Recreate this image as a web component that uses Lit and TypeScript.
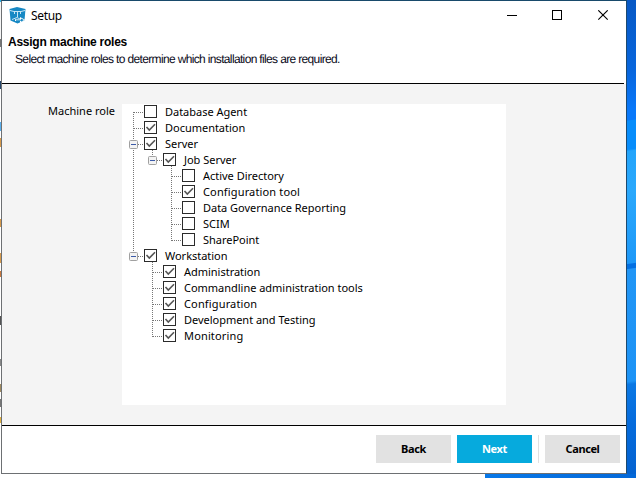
import { LitElement, html, css, svg } from "lit";
import { customElement, property } from "lit/decorators.js";
import { classMap } from "lit/directives/class-map.js";

interface Role {
  label: string;
  level: number;
  checked: boolean;
  open?: boolean;
  last?: boolean;
  wide?: boolean;
  rails?: number[];
}

// rails: ancestor levels whose vertical connector continues past this row
const ROLES: Role[] = [
  { label: "Database Agent", level: 0, checked: false },
  { label: "Documentation", level: 0, checked: true },
  { label: "Server", level: 0, checked: true, open: true },
  { label: "Job Server", level: 1, checked: true, open: true, last: true, rails: [0] },
  { label: "Active Directory", level: 2, checked: false, rails: [0] },
  { label: "Configuration tool", level: 2, checked: true, wide: true, rails: [0] },
  { label: "Data Governance Reporting", level: 2, checked: false, rails: [0] },
  { label: "SCIM", level: 2, checked: false, rails: [0] },
  { label: "SharePoint", level: 2, checked: false, last: true, rails: [0] },
  { label: "Workstation", level: 0, checked: true, open: true, last: true },
  { label: "Administration", level: 1, checked: true },
  { label: "Commandline administration tools", level: 1, checked: true },
  { label: "Configuration", level: 1, checked: true, wide: true },
  { label: "Development and Testing", level: 1, checked: true },
  { label: "Monitoring", level: 1, checked: true, wide: true, last: true },
];

@customElement("role-row")
class RoleRow extends LitElement {
  @property({ attribute: false }) role_!: Role;
  @property({ type: Boolean }) first = false;

  static styles = css`
    :host { display: flex; height: 16px; align-items: center; }
    svg { display: block; flex: none; }
    .label { margin-left: 8px; white-space: pre; line-height: 16px; letter-spacing: -0.02px; }
    .label.wide { letter-spacing: 0.15px; }
    .dots { stroke: #777; stroke-width: 1; stroke-dasharray: 1 1; fill: none; }
    .box { fill: #fff; stroke: #2b2b2b; }
    .tick { fill: none; stroke: #555; stroke-width: 1.6; }
    .knob { fill: #f3f3f3; stroke: #a0a0a0; }
    .minus { stroke: #3b5aa8; }
  `;

  render() {
    const r = this.role_;
    const x = 4.5 + r.level * 19;
    const b = 15.5 + r.level * 19;
    const w = b + 12.5;
    return html`
      <svg width=${w} height="16" viewBox="0 0 ${w} 16" shape-rendering="crispEdges">
        ${(r.rails ?? []).map((l) => svg`<path class="dots" d="M${4.5 + l * 19} 0V16" />`)}
        <path class="dots" d="M${x} ${this.first ? 8 : 0}V${r.last ? 9 : 16}" />
        <path class="dots" d="M${x + 0.5} 8.5H${b}" />
        ${r.open
          ? svg`
              <path class="dots" d="M${x + 19} 14V16" />
              <rect class="knob" x=${x - 4} y="4.5" width="8" height="8" rx="1" shape-rendering="auto" />
              <path class="minus" d="M${x - 2.5} 8.5H${x + 2.5}" />`
          : ""}
        <rect class="box" x=${b} y="1.5" width="12" height="12" />
        ${r.checked
          ? svg`<path class="tick" shape-rendering="auto" d="M${b + 2} 7L${b + 4.800} 10L${b + 10.5} 4.300" />`
          : ""}
      </svg>
      <span class=${classMap({ label: true, wide: !!r.wide })}>${r.label}</span>
    `;
  }
}

@customElement("app-root")
class AppRoot extends LitElement {
  static styles = css`
    :host {
      display: grid;
      box-sizing: border-box;
      width: 636px;
      height: 478px;
      overflow: hidden;
      grid-template: 474px 4px / 1px 626px 9px;
      font: 11px/16px "Noto Sans", "Open Sans", sans-serif;
      color: #000;
    }
    .edge { background: linear-gradient(#2ab4e8 0 2px, #f6f6f6 2px 39px, #777 39px 47px, #f6f6f6 47px 81px, #26466b 81px 89px, #fff 89px 122px, #5bb0ee 122px 131px, #fff 131px 138px, #d69a4c 138px 147px, #fff 147px 219px, #d69a4c 219px 227px, #fff 227px 253px, #d69a4c 253px 263px, #fff 263px 271px, #c9793f 271px 277px, #fff 277px 316px, #555 316px 325px, #fff 325px 359px, #888 359px 366px, #fff 366px 384px, #a08a60 384px 392px, #fff 392px 399px, #777 399px 407px, #fff 407px 417px, #e0b040 417px 423px, #fff 423px); }
    .sky { background: linear-gradient(172deg, #0758c4 0, #0866dd 70px, #0878fa 110px, #0878fa 119px, #078dfb 120px, #078dfb 148px, #23a4fb 150px, #2aa8fc 190px, #1d98f8 261px, #0470e2 262px, #0470e2 266px, #2196f6 267px, #1f94f5 330px, #1c93f6 378px, #0b78e4 381px, #056bdc 420px, #0462d0 474px); }
    .under { grid-column: 1 / 4; background: linear-gradient(90deg, #fff 485px, #0878e8 485px, #0468d8); }
    .window {
      box-sizing: border-box;
      display: flex;
      flex-direction: column;
      background: #fff;
      border: 1px solid #6d7073;
      border-top-color: #184a6b;
      border-right-color: #1c4a70;
    }
    .title { display: flex; height: 29px; align-items: center; }
    .logo { margin: 0 0 1px 7px; }
    .name { font-size: 12px; margin-left: 5px; flex: 1; letter-spacing: -0.35px; }
    .controls { display: flex; margin-right: 17px; }
    .head { height: 53px; margin-right: 2px; border-bottom: 1px solid #000; }
    h1 { font: bold 12px/14px "Liberation Sans", sans-serif; margin: 5px 0 0 6px; letter-spacing: -0.25px; }
    .hint { font: 12px/14px "Liberation Sans", sans-serif; margin: 3px 0 0 13px; letter-spacing: -0.65px; color: #0a0a20; white-space: nowrap; text-rendering: geometricPrecision; }
    .body { display: flex; flex: 1; background: #f4f4f4; padding-top: 20px; align-items: flex-start; }
    .field { width: 113px; text-align: right; margin: -1px 7px 0 0; line-height: 16px; }
    .tree { width: 377px; height: 301px; background: #fff; padding-left: 7px; }
    .foot { display: flex; box-sizing: border-box; height: 48px; border-top: 1px solid #000; padding: 9px 6px 10px 0; justify-content: flex-end; }
    .btn { width: 75px; height: 28px; background: #e2e2e2; font-weight: bold; line-height: 28px; text-align: center; letter-spacing: -0.4px; }
    .primary { background: #06aadd; color: #fff; margin-left: 6px; }
    .rule { width: 1px; height: 28px; margin: 0 6px; background: #e0e0e0; }
  `;

  render() {
    return html`
      <div class="edge"></div>
      <div class="window">
        <div class="title">
          <svg class="logo" width="17" height="17" viewBox="0 0 17 17">
            <path fill="#1688c4" d="M0.500 2L8 0L16.500 2L15.500 13.500L8.500 16.500L1.500 13.500Z" />
            <path fill="none" stroke="#d9eef8" stroke-width="0.900" d="M1 3.500L5 4.500H12L16 3.500M8.500 5V10M5.500 5V7M11.500 5V7M3 12.500L8 10.500L11 12" />
            <path fill="#fff" d="M6 12.300H11V10L16.500 13L11 16V14H6Z" />
            <path fill="#1688c4" d="M7 12.800H12V11.500L15 13L12 14.800V13.700H7Z" />
          </svg>
          <span class="name">Setup</span>
          <svg class="controls" width="102" height="11" viewBox="0 0 102 11" fill="none" stroke="#000">
            <path d="M0 5.500H10" shape-rendering="crispEdges" />
            <rect x="45.500" y="0.500" width="9" height="9" shape-rendering="crispEdges" />
            <path d="M91.300 0.300L100.700 9.700M100.700 0.300L91.300 9.700" stroke-width="1.100" />
          </svg>
        </div>
        <div class="head">
          <h1>Assign machine roles</h1>
          <div class="hint">Select machine roles to determine which installation files are required.</div>
        </div>
        <div class="body">
          <div class="field">Machine role</div>
          <div class="tree">
            ${ROLES.map((r, i) => html`<role-row .role_=${r} ?first=${i === 0}></role-row>`)}
          </div>
        </div>
        <div class="foot">
          ${["Back", "Next", "Cancel"].map(
            (t) => html`${t === "Cancel" ? html`<div class="rule"></div>` : ""}
              <div class=${classMap({ btn: true, primary: t === "Next" })}>${t}</div>`
          )}
        </div>
      </div>
      <div class="sky"></div>
      <div class="under"></div>
    `;
  }
}
